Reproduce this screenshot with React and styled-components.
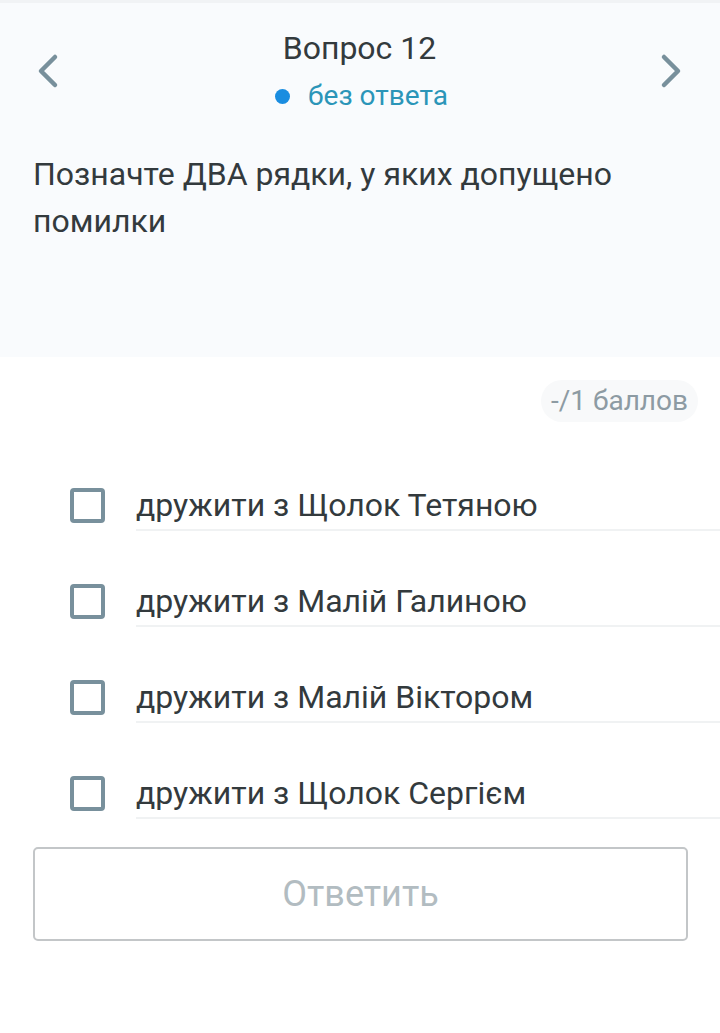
import { createGlobalStyle, styled } from "styled-components";

const GlobalStyle = createGlobalStyle`
  html, body {
    margin: 0;
    padding: 0;
    background: #ffffff;
    font-family: Roboto, "Noto Sans", sans-serif;
  }
`;

const Page = styled.div`
  width: 720px;
  min-height: 1033px;
  background: #ffffff;
  border-top: 3px solid #f1f3f5;
  box-sizing: border-box;
`;

const Header = styled.div`
  background: #f9fbfd;
  height: 354px;
  padding: 0 33px;
  box-sizing: border-box;
`;

const NavRow = styled.div`
  display: flex;
  align-items: center;
  justify-content: space-between;
  padding-top: 25px;
`;

const NavButton = styled.button`
  border: 0;
  background: transparent;
  padding: 0;
  width: 30px;
  height: 40px;
  display: flex;
  align-items: center;
  justify-content: center;
  margin-right: ${(p) => (p.$side === "right" ? "1px" : "0")};
`;

const TitleBlock = styled.div`
  display: flex;
  flex-direction: column;
  align-items: center;
`;

const Title = styled.div`
  font-size: 32px;
  line-height: 40px;
  color: #333a3d;
`;

const Status = styled.div`
  display: flex;
  align-items: center;
  gap: 18px;
  font-size: 28px;
  line-height: 34px;
  color: #2b95b8;
  margin-top: 11px;
  margin-left: 4px;
`;

const Dot = styled.span`
  width: 15px;
  height: 15px;
  border-radius: 50%;
  background: #1a8de0;
`;

const Question = styled.p`
  margin: 38px 0 0;
  font-size: 32px;
  line-height: 47px;
  color: #333a3d;
`;

const Body = styled.div`
  padding: 23px 22px 0 0;
`;

const ScoreRow = styled.div`
  display: flex;
  justify-content: flex-end;
`;

const Score = styled.span`
  background: #f8f9fa;
  border-radius: 21px;
  padding: 3px 10px;
  font-size: 28px;
  line-height: 36px;
  color: #8d9ba3;
`;

const Options = styled.ul`
  list-style: none;
  margin: 13px -22px 0 0;
  padding: 0;
`;

const Option = styled.li`
  display: flex;
  align-items: flex-end;
  height: 96px;
`;

const Box = styled.span`
  flex: none;
  width: 27px;
  height: 27px;
  border: 4px solid #78909c;
  border-radius: 4px;
  margin: 0 31px 8px 70px;
`;

const Label = styled.label`
  flex: 1;
  display: flex;
  align-items: center;
  height: 48px;
  border-bottom: 2px solid #f0f2f3;
  font-size: 32px;
  color: #333a3d;
  cursor: pointer;
`;

const SubmitWrap = styled.div`
  padding: 28px 33px 0 33px;
`;

const Submit = styled.button`
  width: 655px;
  height: 94px;
  border: 2px solid #c3c6c8;
  border-radius: 5px;
  background: #ffffff;
  font-family: Roboto, "Noto Sans", sans-serif;
  font-size: 36px;
  color: #b2bcc1;
`;

const Chevron = ({ dir }) => (
  <svg width="24" height="36" viewBox="0 0 24 36">
    <path
      d={dir === "left" ? "M19 4 L5 18 L19 32" : "M5 4 L19 18 L5 32"}
      fill="none"
      stroke="#78909c"
      strokeWidth="4.5"
      strokeLinecap="round"
      strokeLinejoin="round"
    />
  </svg>
);

const options = [
  "дружити з Щолок Тетяною",
  "дружити з Малій Галиною",
  "дружити з Малій Віктором",
  "дружити з Щолок Сергієм",
];

export default function App() {
  return (
    <>
      <GlobalStyle />
      <Page>
        <Header>
          <NavRow>
            <NavButton $side="left">
              <Chevron dir="left" />
            </NavButton>
            <TitleBlock>
              <Title>Вопрос 12</Title>
              <Status>
                <Dot />
                без ответа
              </Status>
            </TitleBlock>
            <NavButton $side="right">
              <Chevron dir="right" />
            </NavButton>
          </NavRow>
          <Question>Позначте ДВА рядки, у яких допущено помилки</Question>
        </Header>
        <Body>
          <ScoreRow>
            <Score>-/1 баллов</Score>
          </ScoreRow>
          <Options>
            {options.map((o) => (
              <Option key={o}>
                <Box />
                <Label>{o}</Label>
              </Option>
            ))}
          </Options>
        </Body>
        <SubmitWrap>
          <Submit>Ответить</Submit>
        </SubmitWrap>
      </Page>
    </>
  );
}
